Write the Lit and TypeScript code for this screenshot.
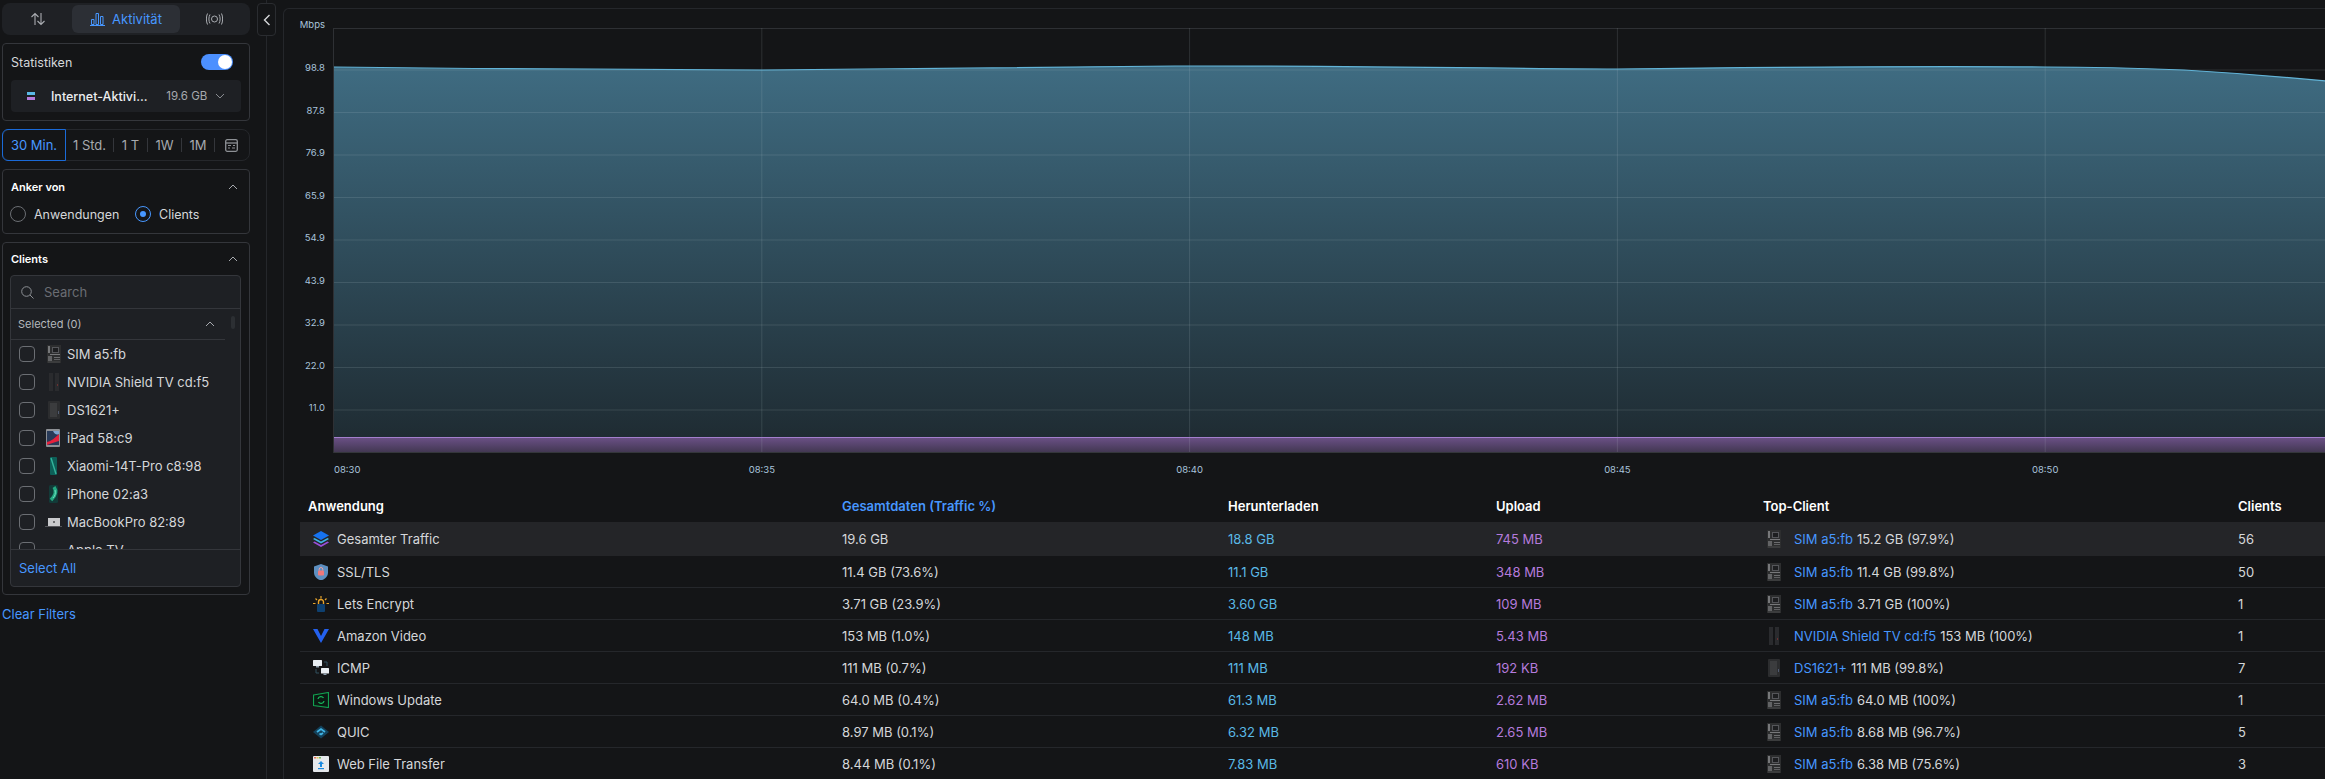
import { LitElement, html, css, svg } from "lit";
import { customElement } from "lit/decorators.js";

const chevUp = html`<svg width="10" height="6" viewBox="0 0 10 6"><path d="M1 5l4-4 4 4" fill="none" stroke="#a6a9ae" stroke-width="1"/></svg>`;

const boardIcon = svg`<rect x="2" y="0" width="14" height="18" fill="#2d2e2f"/><rect x="3" y="1" width="2" height="7" fill="#77787a"/><rect x="7" y="2" width="7" height="6" fill="#55565a"/><rect x="8" y="3" width="5" height="4" fill="#1d1e20"/><rect x="5" y="9" width="10" height="1" fill="#77787a"/><rect x="3" y="11" width="4" height="5" fill="#626365"/><rect x="9" y="12" width="6" height="1" fill="#6b6c6e"/><rect x="9" y="14" width="6" height="1" fill="#5f6062"/><rect x="3" y="16.500" width="12" height="1" fill="#4a4b4d"/>`;
const shieldIcon = svg`<rect x="4" y="0" width="4" height="18" fill="#2a2b2e"/><rect x="10" y="0" width="4" height="18" fill="#2a2b2e"/><rect x="12" y="11" width="1" height="2" fill="#6b3030"/>`;
const nasIcon = svg`<rect x="3" y="0" width="12" height="18" rx="1" fill="#2c2d2f"/><rect x="5" y="2" width="7" height="14" fill="#3b3c3e"/><rect x="13" y="10" width="1" height="3" fill="#505a70"/>`;
const ipadIcon = svg`<rect x="1" y="0" width="14" height="18" rx="1" fill="#8d9095"/><rect x="2" y="2" width="12" height="14" fill="#283a58"/><path d="M2 13c4-1 8-4 12-8v7c-3 1-8 2-12 4z" fill="#e5213c"/><path d="M8 2h6v3c-2 1-4 1-6-3z" fill="#7fa6d0"/>`;
const xiaomiIcon = svg`<rect x="5" y="0" width="7" height="18" rx="1" fill="#0d5f58"/><path d="M6 1l5 16" stroke="#34b49c" stroke-width="1.4"/>`;
const iphoneIcon = svg`<rect x="4" y="0" width="9" height="18" rx="1.5" fill="#123a38"/><path d="M9 2c3 4 1 9-3 13" stroke="#25a982" stroke-width="3.500" fill="none"/><path d="M10 5c1 3 0 6-2 8" stroke="#6fe0c0" stroke-width="1" fill="none"/>`;
const macIcon = svg`<rect x="3" y="5" width="12" height="8" fill="#c9cacc"/><rect x="8" y="8" width="2" height="2" fill="#6d6e70"/><rect x="0" y="13" width="17" height="1" fill="#55565a"/>`;
const tvIcon = svg`<rect x="2" y="8" width="13" height="6" rx="1" fill="#3a3b3d"/>`;

const device = (g: unknown) => html`<svg class="dev" width="18" height="18" viewBox="0 0 18 18">${g}</svg>`;

const appIcons = {
    stack: svg`<path d="M8 0l8 4.500-8 4.500-8-4.500z" fill="#1673f0"/><path d="M1.500 7L8 10.600 14.500 7 16 8 8 12.500 0 8z" fill="#3fb3e4"/><path d="M1.500 10.500L8 14l6.500-3.500L16 11.500 8 16 0 11.500z" fill="#9a4fd8"/>`,
    shield: svg`<path d="M8 0l7 2.500v6c0 4-3 6.500-7 8-4-1.500-7-4-7-8v-6z" fill="#5d8fc0"/><rect x="5" y="6.500" width="6" height="5" rx=".8" fill="#f0787a"/><path d="M6.200 6.500V5.300a1.800 1.800 0 0 1 3.600 0v1.200" fill="none" stroke="#f0a0a2" stroke-width="1"/>`,
    encrypt: svg`<rect x="4" y="8" width="8" height="8" rx="1" fill="#0e4070"/><path d="M5.500 8V6a2.500 2.500 0 0 1 5 0v2" fill="none" stroke="#e7a42c" stroke-width="1.400"/><path d="M8 0v2.500M2.500 2.500l1.500 1.500M13.500 2.500L12 4M0 7.500h2.500M13.500 7.500H16" stroke="#e7a42c" stroke-width="1.200"/>`,
    vee: svg`<path d="M0 1h4.500L8 8l3.500-7H16L8 15z" fill="#2461ee"/>`,
    icmp: svg`<rect x="0" y="0" width="9" height="6" rx=".5" fill="#e9eef2"/><rect x="3" y="6" width="3" height="1.500" fill="#8fa0ad"/><rect x="8" y="8" width="8" height="5.500" rx=".5" fill="#e9eef2"/><rect x="10.500" y="13.500" width="3" height="1.500" fill="#8fa0ad"/><path d="M11 2h3v4M3 9v4h3" fill="none" stroke="#31505f" stroke-width="1"/>`,
    windows: svg`<path d="M.5 3L15.500 .5v15L.5 13.500z" fill="#0a1a12" stroke="#12a150" stroke-width="1.200"/><path d="M5 7a3 3 0 0 1 5.500-1M11 9a3 3 0 0 1-5.500 1" fill="none" stroke="#16b45a" stroke-width="1.300"/>`,
    quic: svg`<path d="M8 1.500l8 6.500-8 6.500-8-6.500z" fill="#14415a"/><path d="M4 8l4-3 4 3M6.500 9.500L8 10.500l2-1.500" fill="none" stroke="#3fb3e4" stroke-width="1.800"/>`,
    web: svg`<rect x="0" y="0" width="16" height="16" rx="1" fill="#e5e8ec"/><rect x="1" y="1" width="2" height="1.500" fill="#e0705c"/><rect x="3.500" y="1" width="2" height="1.500" fill="#e8c050"/><rect x="6" y="1" width="2" height="1.500" fill="#70b860"/><path d="M8 5l3 3H9v3H7V8H5z" fill="#1a8ae0"/><rect x="5" y="12" width="6" height="1.200" fill="#1a8ae0"/>`,
};

const clients = [
    ["SIM a5:fb", boardIcon],
    ["NVIDIA Shield TV cd:f5", shieldIcon],
    ["DS1621+", nasIcon],
    ["iPad 58:c9", ipadIcon],
    ["Xiaomi-14T-Pro c8:98", xiaomiIcon],
    ["iPhone 02:a3", iphoneIcon],
    ["MacBookPro 82:89", macIcon],
    ["Apple TV", tvIcon],
];

const rows = [
    [appIcons.stack, "Gesamter Traffic", "19.6 GB", "18.8 GB", "745 MB", boardIcon, "SIM a5:fb", "15.2 GB (97.9%)", "56"],
    [appIcons.shield, "SSL/TLS", "11.4 GB (73.6%)", "11.1 GB", "348 MB", boardIcon, "SIM a5:fb", "11.4 GB (99.8%)", "50"],
    [appIcons.encrypt, "Lets Encrypt", "3.71 GB (23.9%)", "3.60 GB", "109 MB", boardIcon, "SIM a5:fb", "3.71 GB (100%)", "1"],
    [appIcons.vee, "Amazon Video", "153 MB (1.0%)", "148 MB", "5.43 MB", shieldIcon, "NVIDIA Shield TV cd:f5", "153 MB (100%)", "1"],
    [appIcons.icmp, "ICMP", "111 MB (0.7%)", "111 MB", "192 KB", nasIcon, "DS1621+", "111 MB (99.8%)", "7"],
    [appIcons.windows, "Windows Update", "64.0 MB (0.4%)", "61.3 MB", "2.62 MB", boardIcon, "SIM a5:fb", "64.0 MB (100%)", "1"],
    [appIcons.quic, "QUIC", "8.97 MB (0.1%)", "6.32 MB", "2.65 MB", boardIcon, "SIM a5:fb", "8.68 MB (96.7%)", "5"],
    [appIcons.web, "Web File Transfer", "8.44 MB (0.1%)", "7.83 MB", "610 KB", boardIcon, "SIM a5:fb", "6.38 MB (75.6%)", "3"],
];

// chart coordinates are relative to the chart svg, which starts at x=284
const X0 = 50;
const yLabels = ["98.8", "87.8", "76.9", "65.9", "54.9", "43.9", "32.9", "22.0", "11.0"];
const xLabels = ["08:30", "08:35", "08:40", "08:45", "08:50"];
const topLine = "M50 67 C200 69 400 70 478 70 C700 69 800 66 906 66 C1100 66 1250 69 1333 69 C1500 67 1650 66 1761 67 C1820 67 1850 68 1900 70 C1950 73 2000 77 2042 81";

@customElement("app-root")
export class AppRoot extends LitElement {
    renderChart() {
        return html`<svg class="chart" width="2041" height="490" viewBox="0 0 2041 490">
            <defs>
                <linearGradient id="area" x1="0" y1="65" x2="0" y2="437" gradientUnits="userSpaceOnUse">
                    <stop offset="0" stop-color="#3f6c82" />
                    <stop offset="1" stop-color="#1f2c33" />
                </linearGradient>
                <linearGradient id="up" x1="0" y1="437" x2="0" y2="453" gradientUnits="userSpaceOnUse">
                    <stop offset="0" stop-color="#6c5188" />
                    <stop offset="1" stop-color="#40364f" />
                </linearGradient>
            </defs>
            <rect x="49.500" y="28.500" width="1993" height="424" fill="none" stroke="#2e3034" />
            <path d="${topLine} L2042 437 L50 437 Z" fill="url(#area)" />
            <rect x="50" y="437" width="1992" height="16" fill="url(#up)" />
            ${yLabels.map((l, i) => {
                const y = 70 + i * 42.5;
                return svg`<line x1="50" x2="2042" y1=${y} y2=${y} stroke="#c8d4dc" stroke-opacity="0.14" />
                    <text class="tick" x="41" y=${y - 1.5} text-anchor="end">${l}</text>`;
            })}
            ${xLabels.map((l, i) => {
                const x = X0 + i * 427.8;
                return svg`${i > 0 ? svg`<line x1=${x} x2=${x} y1="28" y2="453" stroke="#c8d4dc" stroke-opacity="0.14" />` : ""}
                    <text class="tick" x=${x} y="470" text-anchor=${i === 0 ? "start" : "middle"}>${l}</text>`;
            })}
            <text class="tick" x="41" y="25" text-anchor="end">Mbps</text>
            <path d=${topLine} fill="none" stroke="#62b4d8" stroke-width="1.2" />
            <line x1="50" x2="2042" y1="437.500" y2="437.500" stroke="#a47fce" stroke-width="1.200" />
            <line x1="50" x2="2042" y1="452.500" y2="452.500" stroke="#34363b" />
        </svg>`;
    }

    renderSidebar() {
        return html`<aside class="side">
            <div class="tabs">
                <div class="tab">
                    <svg width="16" height="14" viewBox="0 0 16 14"><path d="M5 13V2M1.500 5L5 1.500 8.500 5M11 1v11M7.500 9l3.500 3.500L14.500 9" fill="none" stroke="#a9acb1" stroke-width="1.100"/></svg>
                </div>
                <div class="tab active">
                    <svg width="15" height="14" viewBox="0 0 15 14"><path d="M1.500 7.500h2.500v5H1.500zM6 1.500h2.500v11H6zM10.500 4.500H13v8h-2.500zM0 13.500h15" fill="none" stroke="#4797ff" stroke-width="1"/></svg>
                    <span>Aktivität</span>
                </div>
                <div class="tab">
                    <svg width="17" height="12" viewBox="0 0 17 12"><circle cx="8.500" cy="6" r="3" fill="none" stroke="#a9acb1"/><path d="M4 1.500C2.500 4 2.500 8 4 10.500M13 1.500c1.500 2.500 1.500 6.500 0 9M1.500 .5c-1.500 3-1.500 8 0 11M15.500 .5c1.500 3 1.500 8 0 11" fill="none" stroke="#a9acb1"/></svg>
                </div>
            </div>

            <section class="card stats">
                <div class="stats-head">
                    <span>Statistiken</span>
                    <div class="toggle"><i></i></div>
                </div>
                <div class="drop">
                    <span class="legend"><i class="c"></i><i class="p"></i></span>
                    <span class="drop-name">Internet-Aktivi...</span>
                    <span class="drop-val">19.6 GB</span>
                    <svg width="10" height="6" viewBox="0 0 10 6"><path d="M1 1l4 4 4-4" fill="none" stroke="#8d9095"/></svg>
                </div>
            </section>

            <div class="range">
                <div class="r-item on">30 Min.</div>
                <div class="r-item s1">1 Std.</div>
                <div class="r-item s2">1 T</div>
                <div class="r-item s2">1W</div>
                <div class="r-item s3">1M</div>
                <div class="r-cal">
                    <svg width="13" height="13" viewBox="0 0 13 13"><rect x=".7" y=".7" width="11.600" height="11.600" rx="1.500" fill="none" stroke="#8d9095" stroke-width="1.300"/><path d="M.7 4h11.600" stroke="#8d9095" stroke-width="1.300"/><path d="M3 6.500h3M8 6.500h2M3 9h2M7 9h3" stroke="#8d9095" stroke-width="1.200"/></svg>
                </div>
            </div>

            <section class="card anchor">
                <div class="card-head"><b>Anker von</b>${chevUp}</div>
                <div class="radios">
                    <span class="radio"></span><span class="r-label">Anwendungen</span>
                    <span class="radio sel"><i></i></span><span class="r-label">Clients</span>
                </div>
            </section>

            <section class="card clients">
                <div class="card-head"><b>Clients</b>${chevUp}</div>
                <div class="picker">
                    <div class="search">
                        <svg width="13" height="13" viewBox="0 0 13 13"><circle cx="5.500" cy="5.500" r="4.800" fill="none" stroke="#8d9095"/><path d="M9 9l3.500 3.500" stroke="#8d9095"/></svg>
                        <span>Search</span>
                    </div>
                    <div class="scroll-area">
                        <div class="selected"><span>Selected (0)</span>${chevUp}</div>
                        <i class="thumb"></i>
                        ${clients.map(
                            ([name, icon]) => html`<div class="c-row">
                                <span class="check"></span>
                                ${device(icon)}
                                <span>${name}</span>
                            </div>`
                        )}
                    </div>
                    <div class="select-all">Select All</div>
                </div>
            </section>
            <div class="clear">Clear Filters</div>
        </aside>`;
    }

    renderTable() {
        return html`<div class="table">
            <div class="t-row t-head">
                <div class="c1">Anwendung</div>
                <div class="sorted">Gesamtdaten (Traffic %)</div>
                <div>Herunterladen</div>
                <div>Upload</div>
                <div>Top-Client</div>
                <div>Clients</div>
            </div>
            ${rows.map(
                (r, i) => html`<div class="t-row ${i === 0 ? "first" : ""}">
                    <div class="c1"><svg class="app" width="16" height="16" viewBox="0 0 16 16">${r[0]}</svg><span>${r[1]}</span></div>
                    <div>${r[2]}</div>
                    <div class="down">${r[3]}</div>
                    <div class="upl">${r[4]}</div>
                    <div class="top">${device(r[5])}<span class="link">${r[6]}</span><span>${r[7]}</span></div>
                    <div>${r[8]}</div>
                </div>`
            )}
        </div>`;
    }

    render() {
        return html`
            <div class="page">
                ${this.renderSidebar()}
                <div class="collapse">
                    <svg width="8" height="12" viewBox="0 0 8 12"><path d="M6.500 1L1.500 6l5 5" fill="none" stroke="#d5d7da" stroke-width="1.400"/></svg>
                </div>
                <main class="main">${this.renderChart()} ${this.renderTable()}</main>
            </div>
        `;
    }

    static styles = css`
        :host {
            display: block;
            height: 779px;
            overflow: hidden;
            background: #141517;
            color: #d5d7da;
            font-family: Inter, "Noto Sans", sans-serif;
            font-size: 13px;
        }
        .page {
            display: flex;
            position: relative;
            height: 779px;
            overflow: hidden;
        }
        .side {
            width: 267px;
            flex: none;
            box-sizing: border-box;
            padding: 3px 16px 0 2px;
            border-right: 1px solid #25272b;
        }
        .collapse {
            position: absolute;
            left: 257px;
            top: 3px;
            width: 17px;
            height: 31px;
            border: 1px solid #2a2c30;
            border-radius: 4px;
            background: #141517;
            display: flex;
            align-items: center;
            justify-content: center;
        }
        .main {
            margin-left: 16px;
            flex: 1;
            min-width: 0;
            margin-top: 8px;
            border-left: 1px solid #25272b;
            border-top: 1px solid #25272b;
            border-top-left-radius: 6px;
        }
        .tabs {
            display: flex;
            align-items: center;
            height: 32px;
            box-sizing: border-box;
            background: #1f2125;
            border-radius: 8px;
            padding: 0 2px;
        }
        .tab {
            height: 28px;
            display: flex;
            align-items: center;
            justify-content: center;
            gap: 7px;
            width: 68px;
            border-radius: 6px;
        }
        .tab.active {
            width: 108px;
            background: #2c2f35;
            color: #4797ff;
        }
        .tab:last-child {
            flex: 1;
        }
        .card {
            border: 1px solid #34363b;
            border-radius: 4px;
            box-sizing: border-box;
        }
        .stats {
            margin-top: 8px;
            height: 78px;
            padding: 0 8px;
        }
        .stats-head {
            display: flex;
            justify-content: space-between;
            align-items: center;
            height: 36px;
            padding-right: 8px;
            box-sizing: border-box;
            font-size: 12.500px;
        }
        .toggle {
            width: 32px;
            height: 16px;
            border-radius: 8px;
            background: #4c90ff;
            position: relative;
        }
        .toggle i {
            position: absolute;
            right: 1px;
            top: 1px;
            width: 14px;
            height: 14px;
            border-radius: 50%;
            background: #fff;
        }
        .drop {
            height: 32px;
            background: #1e2024;
            border-radius: 4px;
            display: flex;
            align-items: center;
            padding-left: 16px;
            padding-right: 16px;
        }
        .legend {
            width: 8px;
            display: flex;
            flex-direction: column;
            gap: 2px;
        }
        .legend i {
            height: 3px;
        }
        .legend .c {
            background: #5ab9e6;
        }
        .legend .p {
            background: #b57bdc;
        }
        .drop-name {
            margin-left: 16px;
            color: #eceef0;
            font-weight: 500;
            font-size: 12.500px;
            width: 116px;
            white-space: nowrap;
        }
        .drop-val {
            font-size: 11.500px;
            color: #a6a9ae;
            width: 49px;
            white-space: nowrap;
        }
        .range {
            margin-top: 8px;
            height: 32px;
            box-sizing: border-box;
            border: 1px solid #25272b;
            border-radius: 8px;
            display: flex;
            align-items: center;
            color: #a6a9ae;
            position: relative;
        }
        .r-item {
            height: 14px;
            display: flex;
            align-items: center;
            justify-content: center;
            border-right: 1px solid #34363b;
            box-sizing: border-box;
            white-space: nowrap;
        }
        .r-item.on {
            width: 64px;
            height: 32px;
            margin: -1px 0 -1px -1px;
            border: 1px solid #1a6ad8;
            border-radius: 6px 0 0 6px;
            color: #4797ff;
        }
        .r-item.s1 {
            width: 48px;
        }
        .r-item.s2 {
            width: 34px;
        }
        .r-item.s3 {
            width: 33px;
        }
        .r-cal {
            flex: 1;
            display: flex;
            justify-content: center;
            padding-right: 1px;
        }
        .anchor {
            margin-top: 8px;
            height: 65px;
            padding: 0 8px 0 7px;
        }
        .card-head {
            display: flex;
            justify-content: space-between;
            align-items: center;
            height: 33px;
            padding-right: 3px;
            padding-left: 1px;
            color: #fff;
            font-size: 11px;
        }
        .card-head b {
            font-weight: 600;
        }
        .radios {
            display: flex;
            align-items: center;
            height: 16px;
            margin-top: 3px;
            font-size: 12.500px;
        }
        .radio {
            width: 16px;
            height: 16px;
            box-sizing: border-box;
            border: 1px solid #6b6e73;
            border-radius: 50%;
            display: flex;
            align-items: center;
            justify-content: center;
        }
        .radio.sel {
            border-color: #4797ff;
        }
        .radio.sel i {
            width: 6px;
            height: 6px;
            background: #4797ff;
            border-radius: 50%;
        }
        .r-label {
            margin-left: 8px;
            width: 101px;
        }
        .r-label:last-child {
            width: auto;
        }
        .clients {
            margin-top: 8px;
            height: 353px;
            padding: 0 8px 0 7px;
        }
        .clients .card-head {
            height: 32px;
        }
        .picker {
            height: 312px;
            box-sizing: border-box;
            border: 1px solid #34363b;
            border-radius: 4px;
            background: #1e2024;
            display: flex;
            flex-direction: column;
        }
        .search {
            height: 33px;
            flex: none;
            box-sizing: border-box;
            border-bottom: 1px solid #34363b;
            display: flex;
            align-items: center;
            padding-left: 10px;
            gap: 10px;
            color: #6a6d73;
        }
        .scroll-area {
            flex: 1;
            min-height: 0;
            overflow: hidden;
            position: relative;
        }
        .selected {
            height: 31px;
            width: 214px;
            box-sizing: border-box;
            border-bottom: 1px solid #34363b;
            display: flex;
            justify-content: space-between;
            align-items: center;
            padding: 0 10px 0 7px;
            font-size: 11px;
            color: #b5b8bd;
        }
        .thumb {
            position: absolute;
            left: 220px;
            top: 7px;
            width: 4px;
            height: 13px;
            border-radius: 2px;
            background: #2c2f33;
        }
        .c-row {
            height: 28px;
            display: flex;
            align-items: center;
            padding-left: 8px;
            white-space: nowrap;
        }
        .c-row .dev {
            margin-left: 10px;
            margin-right: 4px;
        }
        .check {
            width: 16px;
            height: 16px;
            box-sizing: border-box;
            border: 1px solid #6b6e73;
            border-radius: 4px;
        }
        .select-all {
            flex: none;
            height: 37px;
            box-sizing: border-box;
            border-top: 1px solid #34363b;
            display: flex;
            align-items: center;
            padding-left: 8px;
            color: #4797ff;
        }
        .clear {
            margin-top: 11px;
            color: #4797ff;
        }
        .chart {
            display: block;
            margin-top: -9px;
        }
        .tick {
            font-size: 9.500px;
            fill: #a9c4dc;
            dominant-baseline: middle;
        }
        .table {
            margin-left: 16px;
        }
        .t-row {
            display: grid;
            grid-template-columns: 529px 386px 268px 267px 475px 1fr;
            height: 32px;
            box-sizing: border-box;
            padding-left: 13px;
            align-items: center;
            border-bottom: 1px solid #25272b;
            white-space: nowrap;
        }
        .t-head {
            border-bottom: none;
            color: #fff;
            font-weight: 600;
        }
        .t-head .c1 {
            margin-left: -5px;
        }
        .t-head .sorted {
            color: #4797ff;
        }
        .t-row.first {
            height: 34px;
            background: #242528;
            border-bottom: none;
        }
        .c1 {
            display: flex;
            align-items: center;
            gap: 8px;
        }
        .down {
            color: #5ab9e6;
        }
        .upl {
            color: #b57bdc;
        }
        .top {
            display: flex;
            align-items: center;
            gap: 4px;
        }
        .top .dev {
            margin: 0 7px 0 2px;
        }
        .link {
            color: #4797ff;
        }
    `;
}
